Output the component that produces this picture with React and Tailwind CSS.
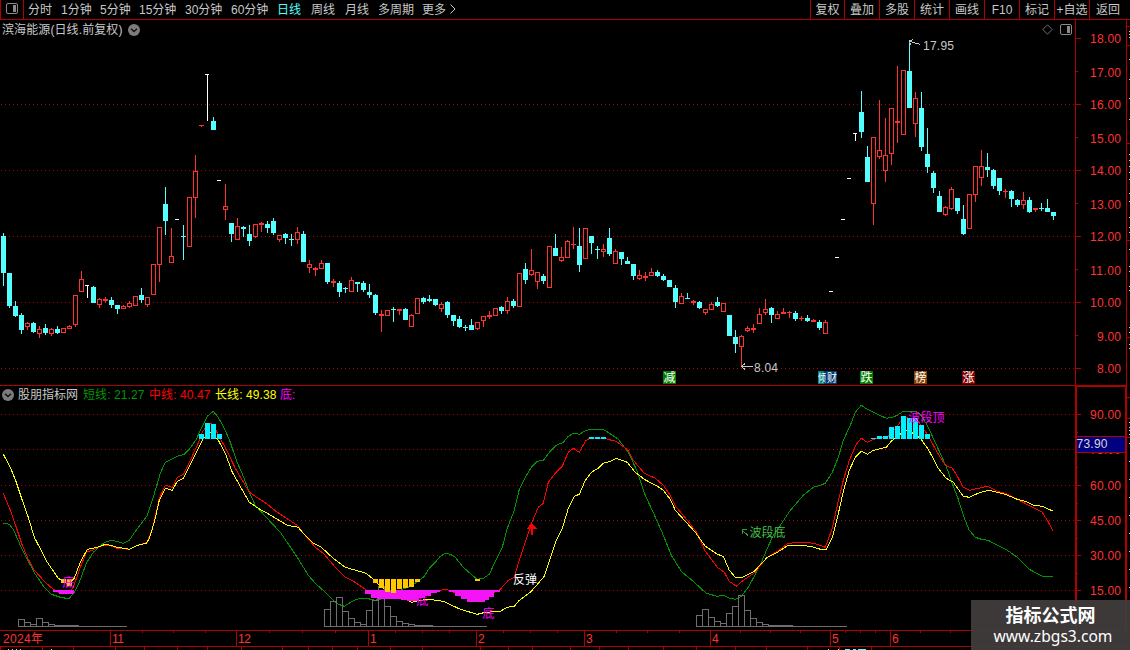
import clsx from "clsx";

const RED = "#ff3232";
const CYAN = "#54ffff";
const LINE = "#b00000";

const periods = [
    { name: "分时", width: "w-[33px]" },
    { name: "1分钟", width: "w-[39px]" },
    { name: "5分钟", width: "w-[39px]" },
    { name: "15分钟", width: "w-[46px]" },
    { name: "30分钟", width: "w-[46px]" },
    { name: "60分钟", width: "w-[46px]" },
    { name: "日线", width: "w-[34px]", active: true },
    { name: "周线", width: "w-[34px]" },
    { name: "月线", width: "w-[33px]" },
    { name: "多周期", width: "w-[44px]" },
    { name: "更多", width: "w-[28px]" },
];

const actions = [
    { name: "复权", width: "w-[34px]" },
    { name: "叠加", width: "w-[35px]" },
    { name: "多股", width: "w-[35px]" },
    { name: "统计", width: "w-[35px]" },
    { name: "画线", width: "w-[35px]" },
    { name: "F10", width: "w-[35px]" },
    { name: "标记", width: "w-[35px]" },
    { name: "+自选", width: "w-[35px]" },
    { name: "返回", width: "w-[37px]" },
];

// type (r = up, c = down, w = flat), high, body top, body bottom, low
const candles = `
c 233 236 273 286|c 273 273 306 308|c 301 306 316 317|c 313 315 330 334|r 322 323 327 330|c 322 323 332 333|r 326 329 334 338|c 324 328 333 335|r 328 329 334 336|c 326 329 333 334
r 328 328 333 333|r 325 326 329 329|r 295 295 325 327|r 271 279 292 292|w 285 285 286 298|c 286 287 303 303|r 298 299 305 308|r 297 299 301 303|c 297 300 305 308|c 305 305 309 314
r 305 306 309 309|r 301 303 307 308|r 296 296 306 306|c 288 295 300 303|r 297 297 305 307|r 264 264 295 295|r 227 227 265 282|c 187 204 221 235|r 228 256 263 263|w 219 219 220 220
c 225 236 237 260|r 197 197 247 247|r 155 171 198 218|r 125 125 126 127|w 74 74 75 121|c 117 121 130 130|w 180 180 181 181|r 184 206 210 220|c 223 223 234 242|r 218 226 240 240
c 226 227 229 237|c 225 234 241 246|r 224 224 237 238|r 222 223 225 232|c 221 224 228 233|c 218 221 233 235|r 235 235 240 242|c 233 234 238 244|c 234 239 240 246|r 227 232 240 244
c 231 234 262 262|r 260 264 268 273|r 267 268 270 276|r 260 263 269 269|c 263 263 282 284|r 279 281 283 287|c 281 283 292 297|c 287 288 289 293|r 277 280 292 292|c 282 282 284 292
c 281 283 290 292|c 284 292 295 298|c 294 295 313 315|r 310 314 316 332|r 310 310 316 316|c 307 309 310 322|r 309 309 311 315|c 308 309 320 320|r 314 315 327 327|r 298 298 314 314
c 297 298 302 304|c 295 299 301 302|c 299 299 305 306|r 302 304 309 312|c 301 302 315 318|c 315 315 321 326|c 316 319 327 328|c 325 327 328 331|c 319 325 330 330|r 322 322 329 330
r 316 316 321 327|r 311 315 317 319|r 308 308 316 316|c 306 307 311 314|r 297 301 311 314|c 299 301 306 308|r 273 273 307 307|c 263 269 280 284|r 249 270 275 276|r 272 272 282 289
c 274 276 281 284|r 246 246 288 288|c 234 248 256 256|r 247 257 261 262|r 240 241 258 258|r 227 244 245 249|c 228 246 265 272|r 228 228 259 259|c 236 236 243 254|c 246 249 250 259
r 244 249 252 257|c 228 238 254 256|r 249 251 264 264|c 252 252 259 265|c 257 261 264 264|c 264 264 276 280|r 270 275 279 280|r 272 276 278 281|r 268 272 276 276|c 270 272 276 277
c 274 276 280 281|c 280 280 287 287|c 285 288 302 308|r 293 296 304 304|c 293 298 299 299|r 300 301 303 305|c 301 302 308 309|r 309 309 313 315|r 302 304 310 310|c 297 302 306 307
r 303 303 312 312|c 315 315 336 336|c 330 337 344 353|r 335 336 347 367|r 326 328 331 332|r 324 328 330 333|r 308 314 324 324|r 299 309 313 315|c 307 308 315 323|r 311 314 319 319
r 308 312 314 314|r 311 312 313 318|c 311 313 319 321|r 316 318 319 321|c 315 318 321 322|r 319 320 322 322|c 320 322 328 330|r 320 322 334 334|w 291 291 292 292|w 257 257 258 258
w 219 219 220 220|w 178 178 179 179|w 133 133 134 141|c 91 112 132 138|c 146 157 182 182|r 137 137 204 225|r 100 150 157 159|r 118 155 171 182|r 108 108 154 165|r 66 121 123 143
r 70 70 135 135|c 40 71 108 108|r 92 98 124 137|c 92 108 147 151|c 128 154 167 173|c 171 173 188 193|c 191 196 212 212|r 206 207 215 216|r 187 189 209 210|c 198 198 211 214
c 205 219 234 235|r 194 194 229 229|r 166 166 195 202|r 150 166 178 186|c 153 167 170 177|c 169 170 186 189|c 178 178 191 195|r 189 191 192 198|c 190 191 199 207|c 199 200 205 207
r 192 200 205 209|c 197 200 212 213|r 208 208 210 212|c 203 208 209 211|c 199 208 212 212|c 212 212 216 220`
    .trim()
    .split(/[|\n]/)
    .map((row) => {
        const [type, ...values] = row.split(" ");
        return [type, ...values.map(Number)];
    });

const shortLine = "3,523 9,524 13,529 20,545 27,559 35,574 44,587 51,594 60,597 66,598 69,598 74,592 79,582 86,563 93,552 103,543 110,540 116,541 123,543 129,540 135,531 147,515 153,497 160,473 165,462 171,459 177,456 184,454 189,449 196,439 201,428 207,416 213,411 218,417 225,430 230,442 236,460 243,476 249,492 255,505 265,516 280,532 295,554 300,562 308,575 316,584 325,592 333,600 338,604 344,606 352,601 359,598 366,598 375,600 383,598 392,593 410,586 418,581 424,576 429,568 435,562 440,556 445,553 450,554 455,557 463,567 472,575 477,579 483,578 489,574 497,557 502,547 507,528 514,510 519,489 525,477 531,467 537,461 543,460 549,452 556,445 563,442 568,436 573,433 579,434 584,431 590,429 602,429 606,431 618,439 628,452 636,469 645,495 656,519 663,535 671,555 681,571 694,582 706,593 717,596 723,595 729,598 735,599 741,596 748,587 755,574 761,562 767,548 773,535 780,525 790,510 803,495 813,487 820,485 825,483 832,472 838,457 843,440 850,425 855,412 861,405 867,409 873,412 886,418 892,417 897,415 903,411 916,411 920,414 927,425 933,438 940,453 947,469 953,486 958,499 963,515 969,530 975,537 981,539 988,540 997,545 1007,550 1017,557 1029,569 1042,576 1053,576";

const midLine = "3,493 10,510 16,527 22,545 28,559 34,570 45,582 53,589 60,593 69,593 73,587 80,567 86,552 92,550 100,546 106,545 112,546 117,548 129,549 137,545 147,542 153,525 159,498 165,485 172,487 177,477 183,474 190,460 197,445 202,432 208,423 213,424 218,435 225,447 235,468 249,492 258,498 267,504 277,512 297,525 303,533 315,547 323,553 335,567 345,577 353,581 365,589 371,594 400,597 425,594 440,590 445,589 449,590 460,595 480,598 499,590 508,580 514,577 518,563 525,542 532,521 538,507 543,503 548,482 555,473 562,466 568,452 573,448 579,452 585,441 589,438 605,438 607,439 616,441 628,450 633,460 644,473 655,478 663,485 670,495 676,507 687,520 697,533 705,551 717,567 724,572 729,581 736,586 743,580 755,572 760,565 767,557 777,551 788,543 802,542 814,543 820,545 825,547 832,528 837,505 843,480 849,460 856,444 861,438 867,442 873,439 887,437 897,426 903,417 910,418 917,420 921,426 927,434 937,452 945,465 952,468 957,476 963,487 969,490 987,486 997,491 1005,493 1017,499 1042,512 1047,520 1053,531";

const longLine = "3,454 10,467 16,482 22,500 28,517 34,537 47,562 58,578 68,584 74,578 80,562 87,549 97,547 105,544 110,545 117,547 129,549 137,545 146,543 149,538 154,522 159,500 165,488 172,490 177,481 183,478 190,464 203,438 210,432 218,440 225,453 232,472 249,502 258,508 267,513 287,525 298,527 303,533 313,543 321,547 333,558 345,567 366,573 373,579 380,586 393,594 407,600 411,602 420,600 428,599 443,601 460,609 477,614 485,612 500,611 507,607 514,606 519,600 530,592 538,583 544,576 550,558 556,540 562,528 568,508 574,496 579,494 585,480 591,472 598,468 603,463 610,461 616,458 627,462 635,472 644,479 657,486 663,490 670,499 675,510 695,532 705,546 717,554 723,556 729,570 735,577 742,577 754,571 767,557 777,552 788,545 803,545 814,547 820,549 826,549 832,537 837,518 843,491 849,470 855,457 861,451 867,454 873,450 886,447 891,441 898,435 906,430 913,433 920,438 928,449 938,468 946,478 953,482 963,496 969,497 980,492 989,490 1005,494 1017,499 1025,501 1033,505 1042,506 1053,511";

// [x, top] of bars standing on the 80 level
const topBars = [
    [199, 434], [205, 423], [211, 424], [217, 434],
    [589, 437], [595, 437], [601, 437],
    [871, 438], [877, 436], [883, 436], [889, 427], [895, 426], [901, 416], [907, 418], [913, 418], [919, 425], [925, 434],
];

// [x, bottom] of bars hanging from the 20 level
const goldBars = [
    [61, 583], [67, 586],
    [373, 583], [379, 588], [385, 592], [391, 593], [397, 589], [403, 588], [409, 587], [415, 582],
    [475, 581],
];

const pinkBars = [
    [53, 592], [59, 594], [65, 594], [68, 594],
    [365, 594], [371, 598], [377, 599], [383, 599], [389, 599], [395, 599], [401, 600], [407, 601], [413, 601], [419, 598], [425, 596], [431, 593], [434, 592],
    [449, 592], [455, 596], [461, 599], [467, 602], [473, 602], [479, 602], [483, 600], [488, 597], [494, 592],
];

const volumeGroups = [
    { end: 127, bars: [[18, 619], [24, 622], [30, 624], [36, 618], [42, 622], [48, 624], [54, 625], [60, 625], [66, 625], [72, 625]] },
    { end: 487, bars: [[324, 609], [330, 601], [336, 597], [342, 611], [348, 618], [354, 622], [360, 624], [366, 610], [372, 600], [378, 586], [384, 606], [390, 616], [396, 621], [402, 623], [408, 624], [414, 625], [420, 625], [426, 625]] },
    { end: 847, bars: [[696, 615], [702, 609], [708, 617], [714, 621], [720, 623], [726, 613], [732, 606], [738, 595], [744, 610], [750, 618], [756, 622], [762, 624], [768, 625], [774, 625], [780, 625], [786, 625]] },
];

const priceTicks = [38, 71, 104, 137, 170, 203, 236, 269, 302, 335, 368];
const indexTicks = [[414, "90.00"], [449, "75.00"], [485, "60.00"], [520, "45.00"], [555, "30.00"], [590, "15.00"]];

const flags = [
    { x: 663, text: "减", color: "#007d00" },
    { x: 860, text: "跌", color: "#007d00" },
    { x: 914, text: "榜", color: "#804000" },
    { x: 962, text: "涨", color: "#800000" },
];

const months = [[3, "2024年", 40], [112, "11", 12], [238, "12", 13], [370, "1"], [478, "2"], [586, "3"], [712, "4"], [832, "5"], [892, "6"]];
const monthLines = [110, 236, 368, 476, 584, 710, 830, 890];
const weekTicks = [142, 173, 205, 269, 302, 335, 395, 422, 449, 503, 530, 557, 616, 647, 679, 740, 770, 800, 845, 860, 875, 920, 950];
const lowerTicks = [0, 42, 73, 115, 144, 177, 207, 241, 282, 308, 332, 357, 390, 422, 480, 508, 532, 570, 599, 628, 663, 696, 735, 766, 807, 839, 871];

function Candle({ index, data }) {
    const [type, high, top, bottom, low] = data;
    const x = 3 + index * 6;

    if (type === "w") {
        return (
            <g fill="#ffffff">
                <rect x={x - 2} y={top} width="4" height="1" />
                <rect x={x} y={high} width="1" height={low - high} />
            </g>
        );
    }

    const color = type === "r" ? RED : CYAN;
    const hollow = type === "r" && bottom - top > 2;

    return (
        <g fill={color}>
            <rect x={x} y={high} width="1" height={low - high} />
            <rect x={x - 2} y={top} width="5" height={bottom - top} />
            {hollow && <rect x={x - 1} y={top + 1} width="3" height={bottom - top - 2} fill="#000" />}
        </g>
    );
}

function GridLines({ levels }) {
    return levels.map((y) => (
        <line key={y} x1="1" x2="1075" y1={y + 0.5} y2={y + 0.5} stroke={LINE} strokeDasharray="1 3" />
    ));
}

function ToggleIcon({ className }) {
    return (
        <svg viewBox="0 0 12 11" className={clsx("w-3 h-[11px] shrink-0", className)}>
            <rect x="0.5" y="0.5" width="11" height="10" rx="1.5" fill="none" stroke="#8a8a8a" />
            <rect x="7" y="2" width="3" height="7" fill="#8a8a8a" />
        </svg>
    );
}

function ChevronBadge() {
    return (
        <svg viewBox="0 0 12 12" className="w-3 h-3 shrink-0">
            <circle cx="6" cy="6" r="6" fill="#7c7c7c" />
            <path d="M3 4.8 L6 7.6 L9 4.8" fill="none" stroke="#111" strokeWidth="1.4" />
        </svg>
    );
}

function Toolbar() {
    return (
        <div className="flex h-5 border-b border-[#b00000] text-[#c8c8c8] leading-[20px] whitespace-nowrap">
            <div className="w-6 border-x border-[#b00000] flex items-center justify-center pr-px pb-[2px] shrink-0">
                <ToggleIcon />
            </div>
            <div className="flex flex-1 pl-1">
                {periods.map((p) => (
                    <span key={p.name} className={clsx("shrink-0", p.width, p.active && "text-[#54ffff]")}>
                        {p.name}
                    </span>
                ))}
                <svg viewBox="0 0 6 10" className="w-[6px] h-[10px] mt-1">
                    <path d="M0.5 0.5 L5 5 L0.5 9.5" fill="none" stroke="#c8c8c8" />
                </svg>
            </div>
            {actions.map((a) => (
                <span key={a.name} className={clsx("shrink-0 border-l border-[#b00000] text-center", a.width)}>
                    {a.name}
                </span>
            ))}
            <span className="w-[4px] shrink-0" />
        </div>
    );
}

function PriceChart() {
    return (
        <svg viewBox="0 20 1075 365" className="block w-[1075px] h-[365px]" shapeRendering="crispEdges">
            <GridLines levels={[104, 170, 236, 302, 368]} />
            {candles.map((c, i) => (
                <Candle key={i} index={i} data={c} />
            ))}

            {/* High and low markers */}
            <g stroke="#c8c8c8" fill="none">
                <path d="M910 41.5 L920.5 44.5 M913 39.5 L909.5 41.5 L911 45" />
                <path d="M741 366.5 H753 M745 363.5 L741.5 366.5 L745 369.5" />
            </g>
            <text x="923" y="50" fill="#c8c8c8" textLength="31">17.95</text>
            <text x="754" y="372" fill="#c8c8c8" textLength="24">8.04</text>

            {/* Event flags */}
            <rect x="818" y="371" width="6" height="13" fill="#008080" />
            <rect x="824" y="371" width="13" height="13" fill="#003a70" />
            <text x="818" y="382" fill="#fff" fontSize="11" textLength="8" lengthAdjust="spacingAndGlyphs">倾</text>
            <text x="827" y="382" fill="#fff" fontSize="11" textLength="10" lengthAdjust="spacingAndGlyphs">财</text>
            {flags.map((f) => (
                <g key={f.x}>
                    <rect x={f.x} y="371" width="13" height="13" fill={f.color} />
                    <text x={f.x + 0.5} y="382" fill="#fff">{f.text}</text>
                </g>
            ))}
        </svg>
    );
}

function PriceAxis() {
    return (
        <svg viewBox="1075 20 55 365" className="block w-[55px] h-[365px]" shapeRendering="crispEdges">
            <rect x="1075" y="20" width="1" height="365" fill={LINE} />
            <rect x="1126" y="20" width="1" height="365" fill={LINE} />
            {priceTicks.map((y, i) => (
                <g key={y}>
                    <rect x="1075" y={y} width={i % 2 ? 3 : 6} height="1" fill={LINE} />
                    <text x="1121" y={y + 5 + (i % 2)} textAnchor="end" textLength={i > 8 ? 24 : 31} fill={RED}>
                        {(18 - i).toFixed(2)}
                    </text>
                </g>
            ))}
            {[26, 45, 143, 240, 337].map((y) => (
                <rect key={y} x="1127" y={y} width="3" height="1" fill={LINE} />
            ))}
            {[31, 34, 37, 59, 79, 98, 119, 154, 160, 166, 172, 179, 193, 201, 217, 227, 232, 249, 266, 271, 286, 290, 327, 332, 344, 348].map((y) => (
                <rect key={y} x="1129" y={y} width="1" height="1" fill="#c8c8c8" />
            ))}
        </svg>
    );
}

function IndicatorChart() {
    return (
        <svg viewBox="0 404 1075 226" className="block w-[1075px] h-[226px]" shapeRendering="crispEdges">
            <GridLines levels={indexTicks.map(([y]) => y)} />
            <g fill="none" strokeWidth="1" transform="translate(0.3 0.3)">
                <polyline points={shortLine} stroke="#009600" />
                <polyline points={midLine} stroke="#ff0000" />
                <polyline points={longLine} stroke="#ffff00" />
            </g>
            {topBars.map(([x, y]) => (
                <rect key={x} x={x} y={y} width="5" height={439 - y} fill="#00f0ff" />
            ))}
            {volumeGroups.map((group) => (
                <g key={group.end} fill="none" stroke="#6e6e6e">
                    {group.bars.map(([x, y]) => (
                        <rect key={x} x={x + 0.5} y={y + 0.5} width="6" height={626 - y} />
                    ))}
                    <line x1={group.bars[0][0]} x2={group.end} y1="626.5" y2="626.5" />
                </g>
            ))}
            {pinkBars.map(([x, y]) => (
                <rect key={x} x={x} y="590" width="6" height={y - 590} fill="#f514f5" />
            ))}
            {goldBars.map(([x, y]) => (
                <rect key={x} x={x} y="579" width="5" height={y - 579} fill="#ffc800" />
            ))}

            {/* Signals */}
            <path d="M531.5 523 L537 528.5 H533 V535 H531 V528.5 H527 Z" fill="#ff0000" />
            <path d="M742 530 L748 535.5 M742 534 V529.5 H746.5" fill="none" stroke="#3c9c3c" />
            <text x="749.5" y="537" fill="#46be46">波段底</text>
            <text x="908.5" y="422" fill="#ff00ff">波段顶</text>
            <text x="513" y="584" fill="#fff">反弹</text>
            <text x="62.5" y="587" fill="#ff00ff">底</text>
            <text x="416.5" y="605" fill="#ff00ff">底</text>
            <text x="482.5" y="618" fill="#ff00ff">底</text>
        </svg>
    );
}

function IndicatorAxis() {
    return (
        <svg viewBox="1075 385 55 245" className="block w-[55px] h-[245px]" shapeRendering="crispEdges">
            <path d="M1076 630 V386 H1126 V630" fill="none" stroke={LINE} strokeWidth="2" />
            {indexTicks.map(([y, label]) => (
                <g key={y}>
                    <rect x="1077" y={y} width="4" height="1" fill={LINE} />
                    <rect x="1077" y={y + 18} width="1" height="1" fill={LINE} />
                    <text x="1121" y={y + 5} textAnchor="end" textLength="31" fill={RED}>{label}</text>
                </g>
            ))}
            <rect x="1077" y="436" width="48" height="17" fill={LINE} />
            <rect x="1077" y="437" width="48" height="15" fill="#000080" />
            <text x="1076.5" y="448" fill="#d8d8d8" textLength="31">73.90</text>
            {[397, 418, 437].map((y) => (
                <rect key={y} x="1127" y={y} width="3" height="1" fill={LINE} />
            ))}
            {[422, 427, 430, 434, 443, 461, 479, 497, 515, 533, 551, 569, 587].map((y) => (
                <rect key={y} x="1129" y={y} width="1" height="1" fill="#c8c8c8" />
            ))}
        </svg>
    );
}

function TimeAxis() {
    return (
        <svg viewBox="0 630 1130 20" className="block w-[1130px] h-[20px]" shapeRendering="crispEdges">
            <rect x="0" y="630" width="1130" height="1" fill={LINE} />
            <rect x="0" y="646" width="1130" height="1" fill={LINE} />
            {monthLines.map((x) => (
                <rect key={x} x={x} y="631" width="1" height="15" fill={LINE} />
            ))}
            {weekTicks.map((x) => (
                <rect key={x} x={x} y="631" width="1" height="2" fill={LINE} />
            ))}
            {lowerTicks.map((x) => (
                <rect key={x} x={x} y="647" width="1" height="3" fill={LINE} />
            ))}
            {months.map(([x, label, width]) => (
                <text key={x} x={x} y="643" fill={RED} textLength={width}>{label}</text>
            ))}
            {[8, 12, 16, 20, 51, 828, 838].map((x) => (
                <rect key={x} x={x} y="649" width="1" height="1" fill="#c8c8c8" />
            ))}
            <path d="M845 649.5 h5 m3 0 h3 m2 0 h8" stroke={CYAN} />
        </svg>
    );
}

function App() {
    return (
        <div className="relative w-[1130px] h-[650px] overflow-hidden bg-black text-[12px] font-['Liberation_Sans','Noto_Sans_CJK_SC',sans-serif]">
            <Toolbar />

            {/* Price panel */}
            <div className="relative flex">
                <PriceChart />
                <PriceAxis />
                <div className="absolute top-0 left-0 w-[1075px] h-[19px] flex items-center pl-[2px] pr-[3px] text-[#c8c8c8]">
                    <span className="w-[126px] tracking-[0.1px] whitespace-nowrap">滨海能源(日线.前复权)</span>
                    <ChevronBadge />
                    <svg viewBox="0 0 11 11" className="w-[11px] h-[11px] ml-auto mr-[7px]">
                        <path d="M5.5 0.8 L10.2 5.5 L5.5 10.2 L0.8 5.5 Z" fill="none" stroke="#6e6e6e" />
                    </svg>
                    <ToggleIcon />
                </div>
            </div>

            {/* Indicator panel */}
            <div className="flex">
                <div className="w-[1075px]">
                    <div className="flex items-center h-[19px] border-t border-[#b00000] pl-[2px] whitespace-nowrap">
                        <ChevronBadge />
                        <span className="w-[65px] ml-[4px] text-[#c8c8c8]">股朋指标网</span>
                        <span className="w-[66px] tracking-[0.1px] text-[#009600]">短线: 21.27</span>
                        <span className="w-[66px] tracking-[0.1px] text-[#ff0000]">中线: 40.47</span>
                        <span className="w-[65px] tracking-[0.1px] text-[#ffff00]">长线: 49.38</span>
                        <span className="text-[#ff00ff]">底:</span>
                    </div>
                    <IndicatorChart />
                </div>
                <IndicatorAxis />
            </div>

            <TimeAxis />

            {/* Site watermark */}
            <div className="absolute right-0 bottom-0 w-[159px] h-[50px] bg-[#403c3c]/95 text-white text-center">
                <div className="mt-[4px] text-[18px] leading-6 font-bold">指标公式网</div>
                <div className="pl-[5px] -mt-px text-[15.6px] leading-[18px] font-['Noto_Sans']">www.zbgs3.com</div>
            </div>
        </div>
    );
}

export default App;
